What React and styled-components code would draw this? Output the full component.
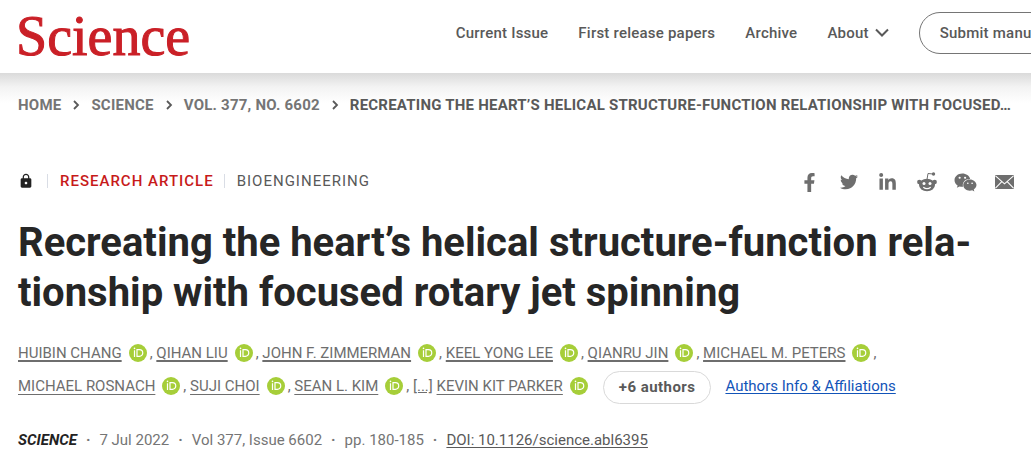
import React from 'react'
import styled, { createGlobalStyle } from 'styled-components'
import { FaFacebookF, FaTwitter, FaLinkedinIn, FaWeixin } from 'react-icons/fa'
import { MdLock } from 'react-icons/md'

const GlobalStyle = createGlobalStyle`
    * {
        box-sizing: border-box;
    }

    body {
        margin: 0;
        background: #fff;
        color: #595959;
        font-family: Roboto, "Liberation Sans", sans-serif;
        font-size: 15px;
    }
`

const Header = styled.header`
    height: 73px;
    overflow: hidden;
    background: #fff;
`

const HeaderInner = styled.div`
    display: flex;
    align-items: center;
    justify-content: space-between;
    min-width: 1110px;
    height: 66px;
    padding: 0 18px 0 16px;
`

const Logo = styled.a`
    padding-top: 6px;
    color: #ca2027;
    font-family: "Liberation Serif", serif;
    font-size: 56px;
    line-height: 60px;
    text-decoration: none;
    -webkit-text-stroke: 1px #ca2027;
`

const Nav = styled.nav`
    display: flex;
    align-items: center;
    gap: 30px;
`

const NavLink = styled.a`
    display: flex;
    align-items: center;
    gap: 6px;
    color: #595959;
    font-weight: 500;
    letter-spacing: 0.015em;
    text-decoration: none;
    white-space: nowrap;
`

const SubmitButton = styled.button`
    height: 42px;
    padding: 0 20px;
    border: 1px solid #757575;
    border-radius: 21px;
    background: #fff;
    color: #595959;
    font: 500 15px Roboto, sans-serif;
    letter-spacing: 0.015em;
    white-space: nowrap;
`

const Main = styled.main`
    padding: 24px 17px 0 18px;
    background: linear-gradient(#dadada, #f3f3f3 14px, #fff 30px);
`

const Breadcrumbs = styled.nav`
    display: flex;
    align-items: center;
    gap: 10px;
    font-weight: 700;
    line-height: 16px;
    letter-spacing: 0.015em;
    white-space: nowrap;
`

const Crumb = styled.a`
    color: #757575;
    text-decoration: none;
`

const CurrentCrumb = styled.span`
    color: #595959;
`

const MetaRow = styled.div`
    display: flex;
    align-items: center;
    justify-content: space-between;
    height: 24px;
    margin-top: 56px;
`

const Labels = styled.div`
    display: flex;
    align-items: center;
    color: #222;

    > svg {
        margin-right: 13px;
    }
`

const Label = styled.span`
    margin-right: 10px;
    padding-left: 12px;
    border-left: 1px solid #d9dde5;
    color: ${({ $accent }) => $accent ? "#c71a1a" : "#595959"};
    font-weight: ${({ $accent }) => $accent ? 500 : 400};
    line-height: 14px;
    letter-spacing: 1px;
`

const Share = styled.div`
    display: flex;
    align-items: center;
    gap: 20px;
    margin-top: 2px;
`

const ShareLink = styled.a`
    display: flex;
    justify-content: center;
    width: 19px;
    color: #6e6e6e;

    svg {
        flex: none;
    }
`

const Title = styled.h1`
    margin: 25px 0 0;
    color: #262626;
    font-size: 40px;
    font-weight: 700;
    line-height: 50px;
    hyphens: manual;
`

const Authors = styled.div`
    margin-top: 19px;
    color: #6e6e6e;
    line-height: 33px;
`

const AuthorLink = styled.a`
    color: #6e6e6e;
    text-decoration: underline;
    text-decoration-skip-ink: none;
    text-decoration-thickness: ${({ $lead }) => $lead ? 2 : 1}px;
    text-underline-offset: ${({ $lead }) => $lead ? 2 : 3}px;
    white-space: nowrap;
`

const OrcidLink = styled.a`
    margin: 0 3px 0 7px;

    svg {
        vertical-align: -4px;
    }
`

const More = styled.a`
    color: #6e6e6e;
`

const MoreButton = styled.button`
    height: 33px;
    margin: 0 14px 0 12px;
    padding: 0 15px;
    border: 1px solid #d9d9d9;
    border-radius: 17px;
    background: #fff;
    color: #595959;
    font: 700 15px Roboto, sans-serif;
    letter-spacing: 0.03em;
    vertical-align: middle;
`

const InfoLink = styled.a`
    color: #1254b8;
    text-decoration-skip-ink: none;
    text-underline-offset: 2px;
`

const Publication = styled.div`
    display: flex;
    align-items: center;
    gap: 9px;
    margin-top: 26px;
    color: #757575;
    line-height: 20px;
    white-space: nowrap;

    em {
        color: #222;
        font-weight: 700;
    }

    a {
        color: #595959;
        text-decoration-skip-ink: none;
        text-underline-offset: 2px;
    }
`

const Dot = styled.span`
    font-weight: 700;
`

const authors = [
    { name: "HUIBIN CHANG", lead: true },
    { name: "QIHAN LIU", lead: true },
    { name: "JOHN F. ZIMMERMAN", lead: true },
    { name: "KEEL YONG LEE", lead: true },
    { name: "QIANRU JIN", lead: true },
    { name: "MICHAEL M. PETERS", lead: true },
    { name: "MICHAEL ROSNACH" },
    { name: "SUJI CHOI" },
    { name: "SEAN L. KIM" },
]

const shares = [
    { name: "Facebook", icon: <FaFacebookF size={19} /> },
    { name: "Twitter", icon: <FaTwitter size={18} /> },
    { name: "LinkedIn", icon: <FaLinkedinIn size={19} /> },
    { name: "Reddit", icon: <RedditIcon /> },
    { name: "WeChat", icon: <FaWeixin size={23} /> },
    { name: "Email", icon: <MailIcon /> },
]

function RedditIcon() {
    return (
        <svg width="20" height="20" viewBox="0 0 20 20" fill="currentColor">
            <path d="M10 7.5 11 1.5 16 2" fill="none" stroke="currentColor" strokeWidth="1" />
            <circle cx="16.5" cy="2" r="1.7" />
            <circle cx="2.3" cy="10" r="2.2" />
            <circle cx="17.7" cy="10" r="2.2" />
            <ellipse cx="10" cy="13" rx="8" ry="6.2" />
            <circle cx="7" cy="11.5" r="1.5" fill="#fff" />
            <circle cx="13" cy="11.5" r="1.5" fill="#fff" />
            <path d="M6.3 15.2Q10 18 13.7 15.2" fill="none" stroke="#fff" strokeWidth="1.2" />
        </svg>
    )
}

function MailIcon() {
    return (
        <svg width="19" height="14" viewBox="0 0 19 14">
            <rect width="19" height="14" rx="1" fill="currentColor" />
            <path d="M0.5 0.8 9.5 8.8 18.5 0.8M0.5 13.2 6.8 6.6M18.5 13.2 12.2 6.6" fill="none" stroke="#fff" strokeWidth="1.1" />
        </svg>
    )
}

function Chevron() {
    return (
        <svg width="10" height="12" viewBox="0 0 10 12" fill="none" stroke="#595959" strokeWidth="1.8">
            <path d="m3 2 4 4-4 4" />
        </svg>
    )
}

function Orcid({ name }) {
    return (
        <OrcidLink href="#orcid" aria-label={`ORCID profile of ${name}`}>
            <svg width="18" height="18" viewBox="0 0 18 18">
                <circle cx="9" cy="9" r="9" fill="#a6ce39" />
                <path d="M5.5 6.3v6.6M8 5.6h2.4a3.3 3.3 0 0 1 0 6.7H8Z" fill="none" stroke="#fff" strokeWidth="1.2" />
                <circle cx="5.5" cy="4.4" r="0.8" fill="#fff" />
            </svg>
        </OrcidLink>
    )
}

function App() {
    return (
        <>
            <GlobalStyle />
            <Header>
                <HeaderInner>
                    <Logo href="#home">Science</Logo>
                    <Nav>
                        <NavLink href="#current">Current Issue</NavLink>
                        <NavLink href="#first-release">First release papers</NavLink>
                        <NavLink href="#archive">Archive</NavLink>
                        <NavLink href="#about">
                            About
                            <svg width="14" height="10" viewBox="0 0 14 10" fill="none" stroke="currentColor" strokeWidth="2">
                                <path d="m1 1.5 6 6 6-6" />
                            </svg>
                        </NavLink>
                        <SubmitButton>Submit manuscript</SubmitButton>
                    </Nav>
                </HeaderInner>
            </Header>
            <Main>
                <Breadcrumbs aria-label="Breadcrumb">
                    <Crumb href="#home">HOME</Crumb>
                    <Chevron />
                    <Crumb href="#science">SCIENCE</Crumb>
                    <Chevron />
                    <Crumb href="#volume">VOL. 377, NO. 6602</Crumb>
                    <Chevron />
                    <CurrentCrumb>RECREATING THE HEART’S HELICAL STRUCTURE-FUNCTION RELATIONSHIP WITH FOCUSED…</CurrentCrumb>
                </Breadcrumbs>
                <MetaRow>
                    <Labels>
                        <MdLock size={16} />
                        <Label $accent>RESEARCH ARTICLE</Label>
                        <Label>BIOENGINEERING</Label>
                    </Labels>
                    <Share>
                        {shares.map(({ name, icon }) => (
                            <ShareLink key={name} href="#share" aria-label={name}>{icon}</ShareLink>
                        ))}
                    </Share>
                </MetaRow>
                <Title>Recreating the heart’s helical structure-function rela&shy;tionship with focused rotary jet spinning</Title>
                <Authors>
                    {authors.map(({ name, lead }) => (
                        <React.Fragment key={name}>
                            <AuthorLink href="#author" $lead={lead}>{name}</AuthorLink>
                            <Orcid name={name} />
                            {", "}
                        </React.Fragment>
                    ))}
                    <More href="#more">[...]</More>
                    {" "}
                    <AuthorLink href="#author">KEVIN KIT PARKER</AuthorLink>
                    <Orcid name="KEVIN KIT PARKER" />
                    <MoreButton>+6 authors</MoreButton>
                    <InfoLink href="#affiliations">Authors Info &amp; Affiliations</InfoLink>
                </Authors>
                <Publication>
                    <em>SCIENCE</em>
                    <Dot>·</Dot>
                    <span>7 Jul 2022</span>
                    <Dot>·</Dot>
                    <span>Vol 377, Issue 6602</span>
                    <Dot>·</Dot>
                    <span>pp. 180-185</span>
                    <Dot>·</Dot>
                    <a href="#doi">DOI: 10.1126/science.abl6395</a>
                </Publication>
            </Main>
        </>
    )
}

export default App
